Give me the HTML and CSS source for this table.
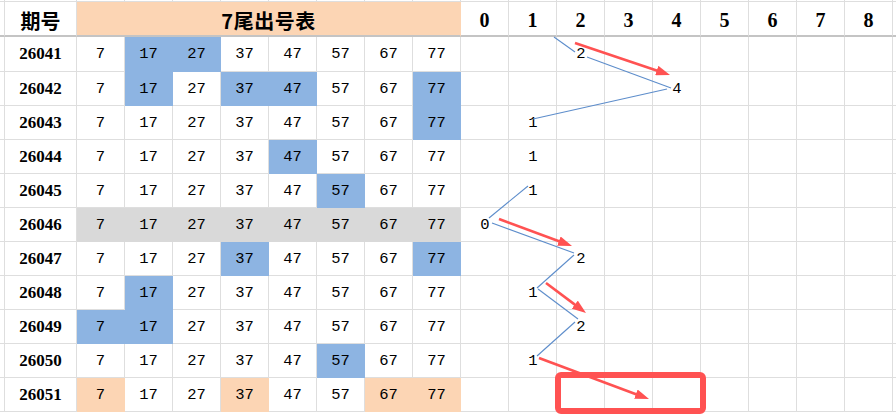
FILE: index.html
```html
<!DOCTYPE html>
<html lang="zh">
<head>
<meta charset="utf-8">
<title>7尾出号表</title>
<link rel="stylesheet" href="styles.css">
</head>
<body>
<div class="sheet">
  <div class="grid">
    <!-- top sliver row -->
    <div class="c top s"></div><div class="c top"></div><div class="c top"></div><div class="c top"></div><div class="c top"></div><div class="c top"></div><div class="c top"></div><div class="c top"></div><div class="c top"></div><div class="c top"></div><div class="c top"></div><div class="c top"></div><div class="c top"></div><div class="c top"></div><div class="c top"></div><div class="c top"></div><div class="c top"></div><div class="c top"></div><div class="c top"></div><div class="c top"></div>

    <!-- header -->
    <div class="c h s"></div>
    <div class="c h hl">期号</div>
    <div class="c h title">7尾出号表</div>
    <div class="c h hd">0</div><div class="c h hd">1</div><div class="c h hd">2</div><div class="c h hd">3</div><div class="c h hd">4</div><div class="c h hd">5</div><div class="c h hd">6</div><div class="c h hd">7</div><div class="c h hd">8</div>
    <div class="c h"></div>

    <!-- 26041 -->
    <div class="c s"></div><div class="c id">26041</div>
    <div class="c n">7</div><div class="c n b">17</div><div class="c n b">27</div><div class="c n">37</div><div class="c n">47</div><div class="c n">57</div><div class="c n">67</div><div class="c n">77</div>
    <div class="c t"></div><div class="c t"></div><div class="c t">2</div><div class="c t"></div><div class="c t"></div><div class="c t"></div><div class="c t"></div><div class="c t"></div><div class="c t"></div><div class="c"></div>

    <!-- 26042 -->
    <div class="c s"></div><div class="c id">26042</div>
    <div class="c n">7</div><div class="c n b">17</div><div class="c n">27</div><div class="c n b">37</div><div class="c n b">47</div><div class="c n">57</div><div class="c n">67</div><div class="c n b">77</div>
    <div class="c t"></div><div class="c t"></div><div class="c t"></div><div class="c t"></div><div class="c t">4</div><div class="c t"></div><div class="c t"></div><div class="c t"></div><div class="c t"></div><div class="c"></div>

    <!-- 26043 -->
    <div class="c s"></div><div class="c id">26043</div>
    <div class="c n">7</div><div class="c n">17</div><div class="c n">27</div><div class="c n">37</div><div class="c n">47</div><div class="c n">57</div><div class="c n">67</div><div class="c n b">77</div>
    <div class="c t"></div><div class="c t">1</div><div class="c t"></div><div class="c t"></div><div class="c t"></div><div class="c t"></div><div class="c t"></div><div class="c t"></div><div class="c t"></div><div class="c"></div>

    <!-- 26044 -->
    <div class="c s"></div><div class="c id">26044</div>
    <div class="c n">7</div><div class="c n">17</div><div class="c n">27</div><div class="c n">37</div><div class="c n b">47</div><div class="c n">57</div><div class="c n">67</div><div class="c n">77</div>
    <div class="c t"></div><div class="c t">1</div><div class="c t"></div><div class="c t"></div><div class="c t"></div><div class="c t"></div><div class="c t"></div><div class="c t"></div><div class="c t"></div><div class="c"></div>

    <!-- 26045 -->
    <div class="c s"></div><div class="c id">26045</div>
    <div class="c n">7</div><div class="c n">17</div><div class="c n">27</div><div class="c n">37</div><div class="c n">47</div><div class="c n b">57</div><div class="c n">67</div><div class="c n">77</div>
    <div class="c t"></div><div class="c t">1</div><div class="c t"></div><div class="c t"></div><div class="c t"></div><div class="c t"></div><div class="c t"></div><div class="c t"></div><div class="c t"></div><div class="c"></div>

    <!-- 26046 -->
    <div class="c s"></div><div class="c id">26046</div>
    <div class="c n g">7</div><div class="c n g">17</div><div class="c n g">27</div><div class="c n g">37</div><div class="c n g">47</div><div class="c n g">57</div><div class="c n g">67</div><div class="c n g">77</div>
    <div class="c t">0</div><div class="c t"></div><div class="c t"></div><div class="c t"></div><div class="c t"></div><div class="c t"></div><div class="c t"></div><div class="c t"></div><div class="c t"></div><div class="c"></div>

    <!-- 26047 -->
    <div class="c s"></div><div class="c id">26047</div>
    <div class="c n">7</div><div class="c n">17</div><div class="c n">27</div><div class="c n b">37</div><div class="c n">47</div><div class="c n">57</div><div class="c n">67</div><div class="c n b">77</div>
    <div class="c t"></div><div class="c t"></div><div class="c t">2</div><div class="c t"></div><div class="c t"></div><div class="c t"></div><div class="c t"></div><div class="c t"></div><div class="c t"></div><div class="c"></div>

    <!-- 26048 -->
    <div class="c s"></div><div class="c id">26048</div>
    <div class="c n">7</div><div class="c n b">17</div><div class="c n">27</div><div class="c n">37</div><div class="c n">47</div><div class="c n">57</div><div class="c n">67</div><div class="c n">77</div>
    <div class="c t"></div><div class="c t">1</div><div class="c t"></div><div class="c t"></div><div class="c t"></div><div class="c t"></div><div class="c t"></div><div class="c t"></div><div class="c t"></div><div class="c"></div>

    <!-- 26049 -->
    <div class="c s"></div><div class="c id">26049</div>
    <div class="c n b">7</div><div class="c n b">17</div><div class="c n">27</div><div class="c n">37</div><div class="c n">47</div><div class="c n">57</div><div class="c n">67</div><div class="c n">77</div>
    <div class="c t"></div><div class="c t"></div><div class="c t">2</div><div class="c t"></div><div class="c t"></div><div class="c t"></div><div class="c t"></div><div class="c t"></div><div class="c t"></div><div class="c"></div>

    <!-- 26050 -->
    <div class="c s"></div><div class="c id">26050</div>
    <div class="c n">7</div><div class="c n">17</div><div class="c n">27</div><div class="c n">37</div><div class="c n">47</div><div class="c n b">57</div><div class="c n">67</div><div class="c n">77</div>
    <div class="c t"></div><div class="c t">1</div><div class="c t"></div><div class="c t"></div><div class="c t"></div><div class="c t"></div><div class="c t"></div><div class="c t"></div><div class="c t"></div><div class="c"></div>

    <!-- 26051 -->
    <div class="c s"></div><div class="c id">26051</div>
    <div class="c n p">7</div><div class="c n">17</div><div class="c n">27</div><div class="c n p">37</div><div class="c n">47</div><div class="c n">57</div><div class="c n p">67</div><div class="c n p">77</div>
    <div class="c t"></div><div class="c t"></div><div class="c t"></div><div class="c t"></div><div class="c t"></div><div class="c t"></div><div class="c t"></div><div class="c t"></div><div class="c t"></div><div class="c"></div>
  </div>

  <svg class="overlay" width="896" height="415" viewBox="0 0 896 415" xmlns="http://www.w3.org/2000/svg">
    <defs>
      <marker id="ah" markerUnits="userSpaceOnUse" markerWidth="15" markerHeight="10" refX="3" refY="5" orient="auto">
        <path d="M0,0 L14,5 L0,10 Z" fill="#ff5252"/>
      </marker>
    </defs>
    <g class="trend">
      <line x1="554" y1="37" x2="575" y2="52"/>
      <line x1="587" y1="57" x2="671" y2="88"/>
      <line x1="667" y1="89" x2="533" y2="119"/>
      <line x1="528" y1="186" x2="489" y2="218"/>
      <line x1="492" y1="223" x2="574" y2="253"/>
      <line x1="574" y1="255" x2="537" y2="288"/>
      <line x1="538" y1="289" x2="578" y2="319"/>
      <line x1="575" y1="322" x2="537" y2="356"/>
    </g>
    <g class="arrows">
      <line x1="575" y1="43" x2="659.6" y2="71.5" marker-end="url(#ah)"/>
      <line x1="499" y1="219" x2="561.7" y2="242.2" marker-end="url(#ah)"/>
      <line x1="546" y1="283" x2="577.2" y2="306.4" marker-end="url(#ah)"/>
      <line x1="539" y1="358" x2="638.7" y2="395.2" marker-end="url(#ah)"/>
    </g>
    <rect class="box" x="558" y="375" width="145" height="36" rx="3" ry="3"/>
  </svg>
</div>
</body>
</html>
```

FILE: styles.css
```css
html, body {
  margin: 0;
  padding: 0;
  background: #ffffff;
}

body {
  width: 896px;
  height: 415px;
  overflow: hidden;
  font-family: "Liberation Mono", "Noto Sans CJK SC", monospace;
  color: #000;
}

.sheet {
  position: relative;
  width: 896px;
  height: 415px;
  overflow: hidden;
}

.grid {
  display: grid;
  grid-template-columns: 5px 72px repeat(17, 48px) 20px;
  grid-template-rows: 2px 35px 35px repeat(10, 34px);
}

.c {
  box-sizing: border-box;
  border-right: 1px solid #dedede;
  border-bottom: 1px solid #dedede;
  display: flex;
  align-items: center;
  justify-content: center;
  background: #fff;
  overflow: hidden;
  white-space: nowrap;
}

.c.h {
  border-bottom: 2px solid #c4c4c4;
  padding-top: 3px;
  font-weight: 700;
}

.hl {
  font-family: "Noto Sans CJK SC", sans-serif;
  font-size: 20px;
}

.title {
  grid-column: span 8;
  background: #fcd5b4;
  border-right-color: #fcd5b4;
  font-family: "Noto Sans CJK SC", sans-serif;
  font-size: 20px;
  letter-spacing: 0.5px;
}

.hd {
  font-family: "Liberation Serif", serif;
  font-size: 20px;
}

.id {
  font-family: "Liberation Serif", serif;
  font-weight: 700;
  font-size: 17px;
}

.n, .t {
  font-family: "Liberation Mono", monospace;
  font-size: 15.5px;
}

.t {
  padding-left: 1px;
}

.b {
  background: #8db4e2;
  border-right-color: #8db4e2;
  border-bottom-color: #8db4e2;
}

.p {
  background: #fcd5b4;
  border-right-color: #fcd5b4;
  border-bottom-color: #fcd5b4;
}

.g {
  background: #d9d9d9;
  border-right-color: #d9d9d9;
  border-bottom-color: #d9d9d9;
}

.overlay {
  position: absolute;
  left: 0;
  top: 0;
  pointer-events: none;
}

.trend line {
  stroke: #5d8dcb;
  stroke-width: 1.1;
  fill: none;
}

.arrows line {
  stroke: #ff5252;
  stroke-width: 2.6;
  fill: none;
}

.box {
  fill: none;
  stroke: #ff5252;
  stroke-width: 6;
}
```
